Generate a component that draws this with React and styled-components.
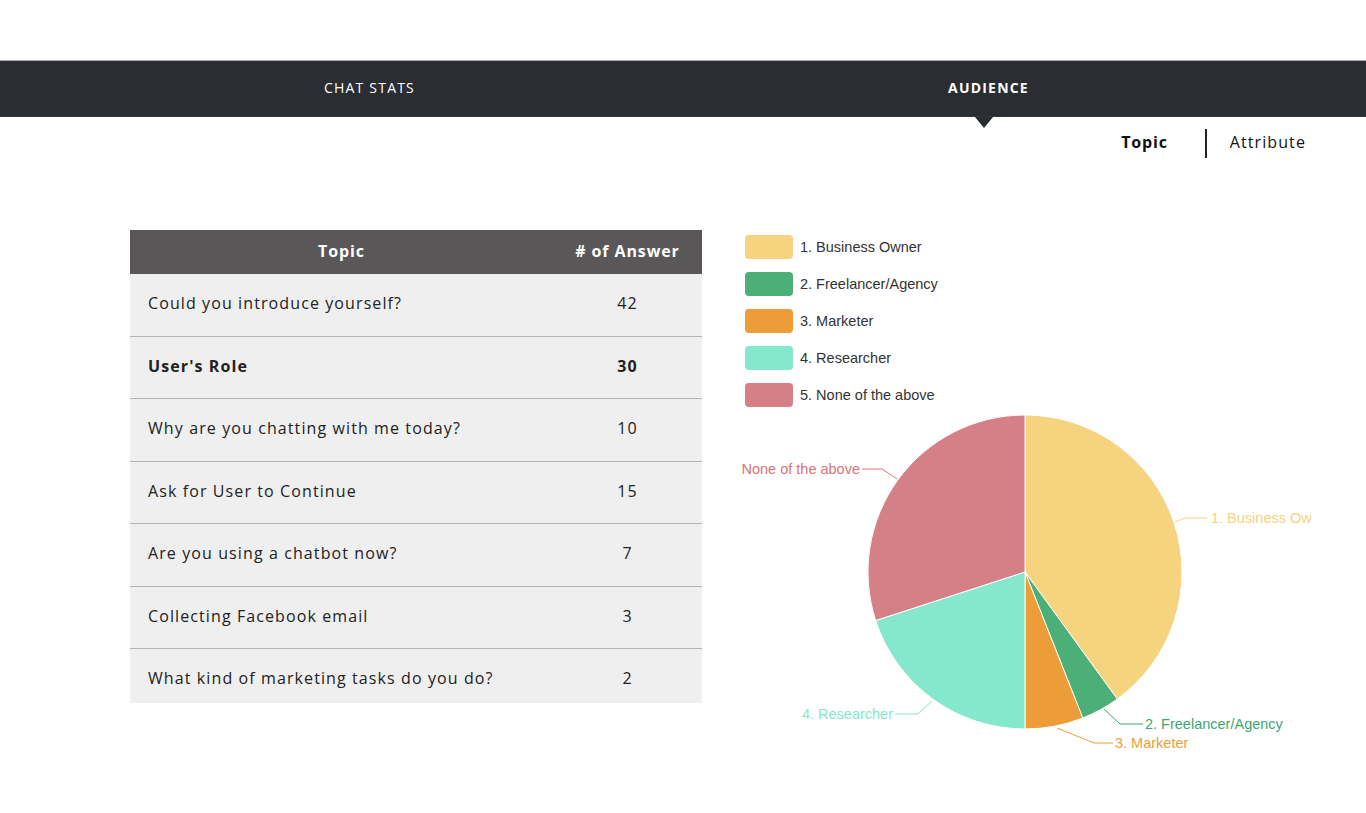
import React from "react";
import styled, { createGlobalStyle } from "styled-components";

const GlobalStyle = createGlobalStyle`
  body {
    margin: 0;
    background: #fff;
    font-family: "Open Sans", "Liberation Sans", sans-serif;
  }
`;

const Page = styled.div`
  width: 1366px;
  min-height: 813px;
  overflow: hidden;
`;

const NavBar = styled.nav`
  margin-top: 60px;
  height: 55px;
  background: #2a2d32;
  border-top: 1px solid #a9a8ad;
  border-bottom: 1px solid #34363a;
  display: flex;
  padding-left: 60px;
`;

const NavTab = styled.div`
  position: relative;
  width: 619px;
  display: flex;
  align-items: center;
  justify-content: center;
  padding-bottom: 2px;
  color: #fff;
  font-size: 14px;
  font-weight: ${(p) => (p.$active ? 700 : 400)};
  letter-spacing: 1.2px;
  text-transform: uppercase;

  &::after {
    content: "";
    display: ${(p) => (p.$active ? "block" : "none")};
    position: absolute;
    left: 50%;
    margin-left: -14px;
    bottom: -12px;
    border-left: 9px solid transparent;
    border-right: 9px solid transparent;
    border-top: 11px solid #2a2d32;
  }
`;

const SubTabs = styled.div`
  display: flex;
  justify-content: flex-end;
  align-items: center;
  margin-top: 12px;
  padding-right: 60px;
`;

const SubTab = styled.div`
  font-size: 16px;
  color: #111;
  font-weight: ${(p) => (p.$active ? 700 : 400)};
  letter-spacing: ${(p) => (p.$active ? "0.8px" : "1.1px")};
  padding: ${(p) => (p.$active ? "0 37px 3px 0" : "0 0 3px 23px")};
  line-height: 26px;
`;

const Divider = styled.span`
  width: 2px;
  height: 29px;
  background: #222;
`;

const Main = styled.div`
  display: flex;
  margin-top: 72px;
  padding-left: 130px;
`;

const TableWrap = styled.div`
  width: 572px;
  height: 473px;
  overflow: hidden;
  align-self: flex-start;
`;

const Table = styled.table`
  width: 100%;
  border-collapse: collapse;
  table-layout: fixed;
`;

const HeadCell = styled.th`
  box-sizing: border-box;
  height: 44px;
  background: #595757;
  color: #fff;
  font-size: 16px;
  font-weight: 700;
  letter-spacing: 0.9px;
  text-align: center;
  padding: 0 0 3px;
  width: ${(p) => p.$w || "auto"};
`;

const Row = styled.tr`
  background: #efefef;
  & + & td {
    border-top: 1px solid #b3b3b3;
  }
`;

const Cell = styled.td`
  height: 58.5px;
  padding: 0 0 3px ${(p) => (p.$num ? "0" : "18px")};
  text-align: ${(p) => (p.$num ? "center" : "left")};
  font-size: 16px;
  color: #222;
  letter-spacing: 1.1px;
  font-weight: ${(p) => (p.$bold ? 700 : 400)};
`;

const ChartCol = styled.div`
  margin-left: 18px;
  padding-top: 5px;
  display: flex;
  flex-direction: column;
`;

const Legend = styled.ul`
  list-style: none;
  margin: 0 0 0 25px;
  padding: 0;
  display: flex;
  flex-direction: column;
  gap: 13px;
`;

const LegendItem = styled.li`
  display: flex;
  align-items: center;
  height: 24px;
  font-family: "Liberation Sans", Arial, sans-serif;
  font-size: 14.5px;
  color: #333;
`;

const Swatch = styled.span`
  width: 48px;
  height: 24px;
  border-radius: 4px;
  background: ${(p) => p.$color};
  margin-right: 7px;
`;

const ChartSvg = styled.svg`
  display: block;
  font-family: "Liberation Sans", Arial, sans-serif;
  font-size: 14.5px;
`;

const topics = [
  { q: "Could you introduce yourself?", n: 42 },
  { q: "User's Role", n: 30, bold: true },
  { q: "Why are you chatting with me today?", n: 10 },
  { q: "Ask for User to Continue", n: 15 },
  { q: "Are you using a chatbot now?", n: 7 },
  { q: "Collecting Facebook email", n: 3 },
  { q: "What kind of marketing tasks do you do?", n: 2 },
];

const slices = [
  {
    name: "1. Business Owner",
    label: "1. Business Owner",
    value: 20,
    color: "#f6d37f",
    text: "#f6d37f",
    line: [[455, 115], [465, 111], [487, 111]],
    tx: 491, ty: 111, anchor: "start",
  },
  {
    name: "2. Freelancer/Agency",
    label: "2. Freelancer/Agency",
    value: 2,
    color: "#4caf78",
    text: "#3fa673",
    line: [[384, 302], [400, 317], [423, 317]],
    tx: 425, ty: 317, anchor: "start",
  },
  {
    name: "3. Marketer",
    label: "3. Marketer",
    value: 3,
    color: "#ec9d38",
    text: "#ec9d38",
    line: [[337, 321], [374, 336], [393, 336]],
    tx: 395, ty: 336, anchor: "start",
  },
  {
    name: "4. Researcher",
    label: "4. Researcher",
    value: 10,
    color: "#85e8cc",
    text: "#85e8cc",
    line: [[212, 294], [198, 307], [175, 307]],
    tx: 173, ty: 307, anchor: "end",
  },
  {
    name: "5. None of the above",
    label: "None of the above",
    value: 15,
    color: "#d58087",
    text: "#d9737c",
    line: [[177, 72], [162, 62], [142, 62]],
    tx: 140, ty: 62, anchor: "end",
  },
];

const CX = 305;
const CY = 165;
const R = 157;

function point(frac) {
  const a = frac * Math.PI * 2;
  return [CX + R * Math.sin(a), CY - R * Math.cos(a)];
}

function PieChart() {
  const total = slices.reduce((s, d) => s + d.value, 0);
  let acc = 0;
  return (
    <ChartSvg width="591" height="360" viewBox="0 0 591 360">
      {slices.map((d) => {
        const start = acc / total;
        acc += d.value;
        const end = acc / total;
        const [x1, y1] = point(start);
        const [x2, y2] = point(end);
        const large = end - start > 0.5 ? 1 : 0;
        return (
          <path
            key={d.name}
            d={`M${CX},${CY} L${x1},${y1} A${R},${R} 0 ${large} 1 ${x2},${y2} Z`}
            fill={d.color}
            stroke="#fff"
            strokeWidth="1"
          />
        );
      })}
      {slices.map((d) => (
        <g key={d.name + "l"}>
          <polyline
            points={d.line.map((p) => p.join(",")).join(" ")}
            fill="none"
            stroke={d.text}
            strokeWidth="1"
          />
          <text x={d.tx} y={d.ty} fill={d.text} textAnchor={d.anchor} dominantBaseline="central">
            {d.label}
          </text>
        </g>
      ))}
    </ChartSvg>
  );
}

export default function App() {
  return (
    <Page>
      <GlobalStyle />
      <NavBar>
        <NavTab>Chat Stats</NavTab>
        <NavTab $active>Audience</NavTab>
      </NavBar>
      <SubTabs>
        <SubTab $active>Topic</SubTab>
        <Divider />
        <SubTab>Attribute</SubTab>
      </SubTabs>
      <Main>
        <TableWrap>
          <Table>
            <thead>
              <tr>
                <HeadCell $w="423px">Topic</HeadCell>
                <HeadCell $w="149px"># of Answer</HeadCell>
              </tr>
            </thead>
            <tbody>
              {topics.map((t) => (
                <Row key={t.q}>
                  <Cell $bold={t.bold}>{t.q}</Cell>
                  <Cell $num $bold={t.bold}>{t.n}</Cell>
                </Row>
              ))}
            </tbody>
          </Table>
        </TableWrap>
        <ChartCol>
          <Legend>
            {slices.map((d) => (
              <LegendItem key={d.name}>
                <Swatch $color={d.color} />
                {d.name}
              </LegendItem>
            ))}
          </Legend>
          <PieChart />
        </ChartCol>
      </Main>
    </Page>
  );
}
